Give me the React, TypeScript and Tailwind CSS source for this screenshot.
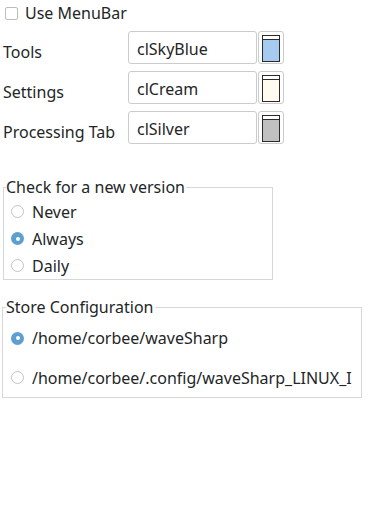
const colorRows = [
  { label: 'Tools', value: 'clSkyBlue', color: '#a6caf0' },
  { label: 'Settings', value: 'clCream', color: '#fffbf0' },
  { label: 'Processing Tab', value: 'clSilver', color: '#c0c0c0' },
];

const versionOptions = [
  { label: 'Never', checked: false },
  { label: 'Always', checked: true },
  { label: 'Daily', checked: false },
];

const storeOptions = [
  { label: '/home/corbee/waveSharp', checked: true },
  { label: '/home/corbee/.config/waveSharp_LINUX_I', checked: false },
];

function Radio({ checked }: { checked: boolean }) {
  if (checked) {
    return (
      <span className="w-[13px] h-[13px] rounded-full bg-[#5e9fd1] flex items-center justify-center shrink-0">
        <span className="w-[4px] h-[4px] rounded-full bg-white" />
      </span>
    );
  }
  return <span className="w-[13px] h-[13px] rounded-full border border-[#c3c4c5] bg-white shrink-0" />;
}

export default function App() {
  return (
    <div className="w-[387px] h-[513px] bg-white text-[16px] text-[#232627] font-['Noto_Sans',sans-serif] overflow-hidden">
      {/* Menu bar toggle */}
      <div className="mt-[7px] h-[13px] flex items-center">
        <span className="ml-[5px] w-[13px] h-[13px] border border-[#bbbcbd] rounded-[2px] bg-white" />
        <span className="ml-[7px] leading-[13px]">Use MenuBar</span>
      </div>

      {/* Colour rows */}
      <div className="mt-[11px] flex flex-col gap-[7px]">
        {colorRows.map((r) => (
          <div key={r.label} className="flex items-start h-[33px]">
            <div className="ml-[3px] w-[125px] mt-[11px] leading-[20px]">{r.label}</div>
            <div className="w-[129px] h-[33px] border border-[#cacbcc] rounded-[3px] flex items-center pl-[8px] pt-[3px] leading-[20px]">
              {r.value}
            </div>
            <div className="ml-[1px] w-[26px] h-[33px] border border-[#cacbcc] rounded-[3px] flex justify-center pt-[3px]">
              <div className="w-[18px] h-[27px] border border-[#2b2b2b] flex flex-col">
                <div className="h-[4px] bg-white border-b border-[#2b2b2b]" />
                <div className="flex-1" style={{ backgroundColor: r.color }} />
              </div>
            </div>
          </div>
        ))}
      </div>

      {/* Check for a new version */}
      <fieldset className="mt-[33px] ml-[3px] w-[270px] border border-[#d6d7d8]">
        <legend className="ml-[2px] pr-[1px] leading-[20px]">Check for a new version</legend>
        <div className="pt-[1px] pl-[7px]">
          {versionOptions.map((o) => (
            <div key={o.label} className="h-[27px] flex items-center gap-[8px] leading-[20px]">
              <Radio checked={o.checked} />
              <span>{o.label}</span>
            </div>
          ))}
        </div>
      </fieldset>

      {/* Store configuration */}
      <fieldset className="mt-[17px] ml-[2px] w-[360px] border border-[#d6d7d8]">
        <legend className="ml-[3px] pr-[1px] leading-[20px]">Store Configuration</legend>
        <div className="pt-[1px] pl-[8px] pr-[3px]">
          {storeOptions.map((o, i) => (
            <div key={o.label} className={`flex items-center gap-[8px] leading-[20px] ${i === 0 ? 'h-[40px]' : 'h-[39px]'}`}>
              <Radio checked={o.checked} />
              <span className="flex-1 whitespace-nowrap overflow-hidden">{o.label}</span>
            </div>
          ))}
        </div>
      </fieldset>
    </div>
  );
}
